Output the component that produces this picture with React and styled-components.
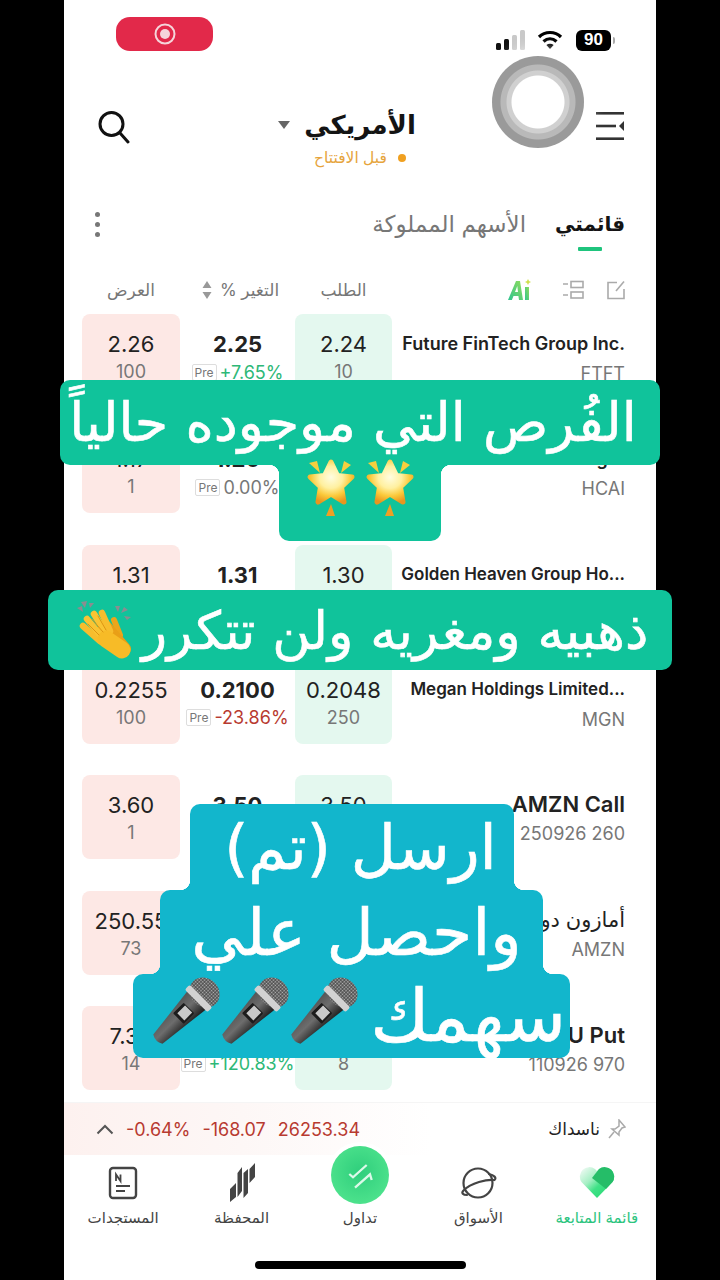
import styled, { createGlobalStyle, css } from "styled-components";

const GlobalStyle = createGlobalStyle`
  html, body { margin: 0; padding: 0; background: #000; }
  * { box-sizing: border-box; }
`;

const UI_FONT = `Inter, "Noto Sans", "DejaVu Sans", sans-serif`;

const Page = styled.div`
  position: relative;
  width: 720px;
  height: 1280px;
  overflow: hidden;
  background: #000;
  font-family: ${UI_FONT};
`;
const Screen = styled.div`
  display: flex;
  flex-direction: column;
  width: 592px;
  height: 1280px;
  margin: 0 auto;
  background: #fff;
`;
const StatusBar = styled.div`
  display: flex;
  justify-content: space-between;
  height: 102px;
  padding: 17px 39px 0 52px;
`;
const RecPill = styled.div`
  display: flex;
  align-items: center;
  justify-content: center;
  width: 97px;
  height: 34px;
  border-radius: 14px;
  background: #e2294a;
`;
const StatusIcons = styled.div`
  display: flex;
  align-items: center;
  gap: 11px;
  height: 24px;
  margin-top: 11px;
`;
const Battery = styled.div`
  position: relative;
  display: flex;
  align-items: center;
  justify-content: center;
  width: 35px;
  height: 21px;
  border-radius: 6px;
  background: #000;
  color: #fff;
  font: 700 17px "Liberation Sans", sans-serif;
  margin-left: 2px;
  margin-right: 6px;
  &::after {
    content: "";
    position: absolute;
    right: -4px;
    top: 7px;
    width: 2px;
    height: 7px;
    border-radius: 0 2px 2px 0;
    background: #aaa;
  }
`;
const Header = styled.div`
  display: flex;
  align-items: flex-start;
  justify-content: space-between;
  height: 104px;
  padding: 0 32px 0 34px;
`;
const TitleBlock = styled.div`
  display: flex;
  flex-direction: column;
  align-items: center;
  flex: 1;
  padding-top: 2px;
`;
const TitleRow = styled.div`
  display: flex;
  align-items: center;
  gap: 14px;
  margin-right: 32px;
`;
const Title = styled.div`
  font-size: 26px;
  line-height: 42px;
  font-weight: 700;
  color: #141414;
`;
const Caret = styled.div`
  width: 0;
  height: 0;
  border-left: 6px solid transparent;
  border-right: 6px solid transparent;
  border-top: 8px solid #666;
`;
const Session = styled.div`
  display: flex;
  align-items: center;
  gap: 11px;
  margin-top: 2px;
  margin-right: 6px;
  font-size: 15.5px;
  line-height: 20px;
  color: #e6a43c;
`;
const SessionDot = styled.span`
  width: 8px;
  height: 8px;
  border-radius: 50%;
  background: #f0a020;
`;
const IconBox = styled.div`
  display: flex;
  align-items: center;
  justify-content: center;
  margin-top: ${(p) => p.$top || 0}px;
`;
const TabsRow = styled.div`
  display: flex;
  align-items: flex-start;
  justify-content: space-between;
  height: 68px;
  padding: 0 31px 0 31px;
`;
const Tabs = styled.div`
  display: flex;
  gap: 29px;
`;
const Tab = styled.div`
  display: flex;
  flex-direction: column;
  align-items: center;
  font-size: ${(p) => (p.$active ? 20 : 23)}px;
  font-weight: ${(p) => (p.$active ? 700 : 400)};
  line-height: 36px;
  color: ${(p) => (p.$active ? "#141414" : "#777")};
`;
const Indicator = styled.div`
  width: 24px;
  height: 4px;
  margin-top: 5px;
  background: #1fc47d;
  border-radius: 1px;
`;
const MoreDots = styled.div`
  display: flex;
  flex-direction: column;
  gap: 5px;
  margin-top: 6px;
`;
const Dot = styled.span`
  width: 5px;
  height: 5px;
  border-radius: 50%;
  background: #777;
`;
const Grid = styled.div`
  display: grid;
  grid-template-columns: 98px 115px 97px 233px;
  padding: 0 31px 0 18px;
`;
const ColumnHead = styled(Grid)`
  height: 40px;
  align-items: center;
  padding-bottom: 8px;
  font-size: 17px;
  color: #777;
`;
const HeadCell = styled.div`
  display: flex;
  align-items: center;
  justify-content: center;
  gap: 8px;
  padding-left: ${(p) => p.$pad || 0}px;
`;
const HeadIcons = styled.div`
  display: flex;
  align-items: center;
  justify-content: flex-end;
  gap: 23px;
  & > :first-child {
    margin-right: 7px;
  }
`;
const Rows = styled.div`
  flex: 1;
  display: flex;
  flex-direction: column;
  gap: 31.33px;
`;
const Row = styled(Grid)`
  height: 84px;
`;
const Quote = styled.div`
  display: flex;
  flex-direction: column;
  align-items: center;
  padding-top: 17px;
  border-radius: 8px;
  background: ${(p) => p.$bg || "transparent"};
`;
const Value = styled.div`
  font-size: 22px;
  line-height: 26px;
  font-weight: ${(p) => (p.$bold ? 700 : 400)};
  color: #222;
`;
const Sub = styled.div`
  font-size: 18px;
  line-height: 26px;
  margin-top: 2px;
  color: #777;
`;
const PctRow = styled.div`
  display: flex;
  align-items: center;
  gap: 3px;
  height: 26px;
  margin-top: 2px;
  white-space: nowrap;
`;
const PreBadge = styled.span`
  display: flex;
  align-items: center;
  justify-content: center;
  width: 25px;
  height: 17px;
  border: 1px solid #ddd;
  border-radius: 2px;
  font-size: 12px;
  color: #777;
`;
const Pct = styled.span`
  font-size: 18px;
  color: ${(p) => p.$color};
`;
const NameCell = styled.div`
  display: flex;
  flex-direction: column;
  align-items: flex-end;
  padding-top: ${(p) => (p.$size > 20 ? 16 : 19)}px;
  white-space: nowrap;
`;
const Name = styled.div`
  font-size: ${(p) => p.$size}px;
  line-height: ${(p) => (p.$size > 20 ? 26 : 21)}px;
  font-weight: ${(p) => p.$weight || 600};
  color: #222;
`;
const Symbol = styled.div`
  font-size: 18px;
  line-height: 24px;
  margin-top: ${(p) => (p.$size > 20 ? 5 : 8)}px;
  color: #777;
`;
const Ticker = styled.div`
  display: flex;
  align-items: center;
  justify-content: space-between;
  height: 53px;
  flex: none;
  padding: 0 30px 0 32px;
  border-top: 1px solid #f5f5f5;
  background: linear-gradient(90deg, #fdf1ef 0%, #fdf7f6 30%, #fff 62%);
`;
const TickerLeft = styled.div`
  display: flex;
  align-items: center;
  gap: 12px;
  font-size: 18px;
  color: #b83a30;
`;
const TickerRight = styled.div`
  display: flex;
  align-items: center;
  gap: 8px;
  font-size: 17px;
  color: #222;
`;
const TabBar = styled.div`
  flex: none;
  height: 125px;
  display: flex;
  flex-direction: column;
  justify-content: space-between;
  padding-bottom: 11px;
`;
const NavGrid = styled.div`
  display: grid;
  grid-template-columns: repeat(5, 1fr);
  padding-top: 7px;
`;
const NavItem = styled.div`
  display: flex;
  flex-direction: column;
  align-items: center;
  gap: 5px;
`;
const NavIcon = styled.div`
  display: flex;
  align-items: center;
  justify-content: center;
  height: 42px;
`;
const TradeButton = styled.div`
  display: flex;
  align-items: center;
  justify-content: center;
  width: 58px;
  height: 58px;
  margin-top: -16px;
  border-radius: 50%;
  background: radial-gradient(circle at 50% 45%, #2fce7c, #57e992);
  box-shadow: 0 0 0 4px #fff;
`;
const NavLabel = styled.div`
  font-size: 15px;
  line-height: 18px;
  white-space: nowrap;
  color: ${(p) => (p.$active ? "#2cc47e" : "#444")};
`;
const HomeBar = styled.div`
  width: 211px;
  height: 8px;
  margin: 0 auto;
  border-radius: 4px;
  background: #000;
`;
const TouchBall = styled.div`
  position: absolute;
  left: 492px;
  top: 56px;
  width: 92px;
  height: 92px;
  border-radius: 50%;
  background: radial-gradient(circle, #fff 0 26px, #d0d0d0 27px 31px, #b9b9b9 32px 37px, #9a9a9a 38px);
  box-shadow: 0 0 14px 6px rgba(255, 255, 255, 0.9);
`;
const Caption = styled.div`
  position: absolute;
  left: ${(p) => p.$left || 0}px;
  top: ${(p) => p.$top}px;
  width: 720px;
  display: flex;
  flex-direction: column;
  align-items: center;
  font-family: "DejaVu Sans", serif;
  color: #fff;
  -webkit-text-stroke: 0.6px #fff;
`;

// concave corners where a narrow caption line meets a wider one
const flare = (bg, side) => css`
  &::before,
  &::after {
    content: "";
    position: absolute;
    ${side}: 0;
    width: 10px;
    height: 10px;
  }
  &::before {
    left: -10px;
    background: radial-gradient(circle at 0 ${side === "bottom" ? "0" : "100%"}, transparent 10px, ${bg} 10.5px);
  }
  &::after {
    right: -10px;
    background: radial-gradient(circle at 100% ${side === "bottom" ? "0" : "100%"}, transparent 10px, ${bg} 10.5px);
  }
`;

const CaptionLine = styled.div`
  position: relative;
  display: flex;
  align-items: center;
  justify-content: ${(p) => p.$justify || "center"};
  gap: ${(p) => p.$gap || 0}px;
  width: ${(p) => p.$w}px;
  height: ${(p) => p.$h}px;
  padding: ${(p) => p.$pad || "0"};
  border-radius: ${(p) =>
    p.$flare === "bottom" ? "10px 10px 0 0" : p.$flare === "top" ? "0 0 10px 10px" : "10px"};
  background: ${(p) => p.$bg};
  font-size: ${(p) => p.$size || 54}px;
  white-space: nowrap;
  ${(p) => p.$flare && flare(p.$bg, p.$flare)}
`;
const StarRow = styled.div`
  display: flex;
  gap: 3px;
  align-self: flex-start;
  margin-top: -10px;
`;
const MicRow = styled.div`
  display: flex;
  align-self: flex-start;
  margin-right: 12px;
`;

const GREEN = "#2db877";
const RED = "#b83a30";
const GREY = "#777";
const TEAL = "#10c39b";
const CYAN = "#12b6cc";

// values that the captions cover in the picture are left out
const quotes = [
  { ask: "2.26", askQty: "100", last: "2.25", pct: "+7.65%", color: GREEN, bid: "2.24", bidQty: "10", name: "Future FinTech Group Inc.", size: 18, symbol: "FTFT" },
  { ask: "1.17", askQty: "1", last: "1.20", pct: "0.00%", color: GREY, name: "Huachen AI Parking...", size: 18, symbol: "HCAI" },
  { ask: "1.31", last: "1.31", bid: "1.30", name: "Golden Heaven Group Ho...", size: 17 },
  { ask: "0.2255", askQty: "100", last: "0.2100", pct: "-23.86%", color: RED, bid: "0.2048", bidQty: "250", name: "Megan Holdings Limited...", size: 17, symbol: "MGN" },
  { ask: "3.60", askQty: "1", last: "3.50", bid: "3.50", name: "AMZN Call", size: 22, symbol: "250926 260" },
  { ask: "250.55", askQty: "73", name: "أمازون دوت كوم", size: 21, weight: 400, symbol: "AMZN" },
  { ask: "7.30", askQty: "14", pct: "+120.83%", color: GREEN, bidQty: "8", name: "MSTU Put", size: 22, symbol: "110926 970" },
];

function NewsIcon() {
  return (
    <svg width="30" height="34" viewBox="0 0 30 34" fill="none">
      <rect x="2" y="2" width="26" height="30" rx="3" stroke="#444" strokeWidth="2.4" />
      <path d="M8 15V8.5l4.5 6.5V8.5" stroke="#444" strokeWidth="1.8" />
      <path d="M8 20h14M8 25h9" stroke="#444" strokeWidth="2" />
    </svg>
  );
}

function PortfolioIcon() {
  return (
    <svg width="28" height="40" viewBox="0 0 28 40" fill="#444">
      <path d="M2 26l6-6v14l-6 5zM9.5 10L14 4v24l-4.5 6zM15.5 10L20 6v24l-4.5 5zM21.5 6L27 0v14l-5.5 6z" />
    </svg>
  );
}

function PlanetIcon() {
  return (
    <svg width="38" height="36" viewBox="0 0 38 36" fill="none" stroke="#444" strokeWidth="2.2" strokeLinecap="round">
      <circle cx="19" cy="18" r="14.5" />
      <path d="M30 9c5 1 8 4 5.500 6C28 14 12 18 4.500 25.500 2 28 4 30 8 30" />
    </svg>
  );
}

function HeartIcon() {
  return (
    <svg width="36" height="32" viewBox="0 0 36 32">
      <defs>
        <linearGradient id="heartBody" x1="0" y1="0.1" x2="0.7" y2="0.8">
          <stop offset="0" stopColor="#eefaf3" />
          <stop offset="0.45" stopColor="#a5efc4" />
          <stop offset="0.75" stopColor="#3fe286" />
          <stop offset="1" stopColor="#33dc7c" />
        </linearGradient>
      </defs>
      <path d="M18 31L2.500 15A9.500 9.500 0 0 1 16 2l2 2 2-2a9.500 9.500 0 0 1 13.500 13z" fill="url(#heartBody)" />
      <path d="M13 11l7-9a9.500 9.500 0 0 1 13.500 13L27 22z" fill="#25bd68" />
    </svg>
  );
}

function TradeIcon() {
  return (
    <svg width="30" height="30" viewBox="0 0 30 30" fill="none" stroke="#dcf9e9" strokeWidth="2.3">
      <path d="M4.300 14L8 17.300 21.700 5" />
      <path d="M10 27.700L25 14.300l1.700 5.700" />
    </svg>
  );
}

function SearchIcon() {
  return (
    <svg width="32" height="34" viewBox="0 0 32 34" fill="none" stroke="#111" strokeWidth="3">
      <circle cx="13.5" cy="14" r="11.5" />
      <path d="M22 23l8 9" strokeLinecap="round" />
    </svg>
  );
}

function MenuIcon() {
  return (
    <svg width="28" height="30" viewBox="0 0 28 30" fill="#333">
      <rect y="1" width="28" height="2.6" />
      <rect y="13.7" width="20" height="2.6" />
      <path d="M28 10v10l-5-5z" />
      <rect y="26.4" width="28" height="2.6" />
    </svg>
  );
}

function SignalIcon() {
  return (
    <svg width="30" height="20" viewBox="0 0 30 20">
      <rect x="0" y="13" width="5" height="7" rx="1.5" fill="#111" />
      <rect x="8" y="9" width="5" height="11" rx="1.5" fill="#111" />
      <rect x="16" y="5" width="5" height="15" rx="1.5" fill="#c9c9c9" />
      <rect x="24" y="0" width="5" height="20" rx="1.5" fill="#c9c9c9" />
    </svg>
  );
}

function WifiIcon() {
  return (
    <svg width="26" height="20" viewBox="0 0 26 20" fill="none" stroke="#000" strokeWidth="3.2">
      <path d="M2 7c6-6 16-6 22 0" />
      <path d="M6.5 11.5c4-3.6 9-3.6 13 0" />
      <path d="M13 19l-3.6-4c2-1.6 5.2-1.6 7.2 0z" fill="#000" stroke="none" />
    </svg>
  );
}

function EditIcon() {
  return (
    <svg width="18" height="20" viewBox="0 0 18 20" fill="none" stroke="#aaa" strokeWidth="1.6">
      <path d="M10 2.5H1v16h16V9" />
      <path d="M9 11l8-9.5" />
    </svg>
  );
}

function ListIcon() {
  return (
    <svg width="22" height="20" viewBox="0 0 22 20" fill="none" stroke="#aaa" strokeWidth="1.6">
      <path d="M1 4h5M1 15h5" />
      <rect x="9" y="1.5" width="12" height="6" />
      <rect x="9" y="12" width="12" height="6" />
    </svg>
  );
}

function AiIcon() {
  return (
    <svg width="24" height="22" viewBox="0 0 24 22">
      <defs>
        <linearGradient id="aiFill" x1="0" y1="1" x2="1" y2="0">
          <stop offset="0" stopColor="#2fc48f" />
          <stop offset="1" stopColor="#8fdc5c" />
        </linearGradient>
      </defs>
      <path d="M0 21L8 2h4l3 19h-4l-.6-4H5.500l-1.600 4zM7 13h3l-.7-6z" fill="url(#aiFill)" />
      <rect x="17" y="8" width="4" height="13" fill="url(#aiFill)" />
      <path d="M20 0l1 2 2 1-2 1-1 2-1-2-2-1 2-1z" fill="#cfe04d" />
    </svg>
  );
}

function SortIcon() {
  return (
    <svg width="10" height="18" viewBox="0 0 10 18" fill="#999">
      <path d="M5 0l4.500 7h-9zM5 18l-4.500-7h9z" />
    </svg>
  );
}

function PinIcon() {
  return (
    <svg width="18" height="20" viewBox="0 0 18 20" fill="none" stroke="#aaa" strokeWidth="1.5">
      <path d="M11 1l6 7-3 1-3 4 0 3-7-6 3 0 4-3z" />
      <path d="M6 13l-5 6" />
    </svg>
  );
}

function ChevronIcon() {
  return (
    <svg width="18" height="11" viewBox="0 0 18 11" fill="none" stroke="#555" strokeWidth="2">
      <path d="M1.500 9.500L9 2l7.500 7.500" />
    </svg>
  );
}

function StarEmoji() {
  return (
    <svg width="56" height="62" viewBox="0 0 56 62">
      <defs>
        <radialGradient id="starFill" cx="0.5" cy="0.38" r="0.66">
          <stop offset="0" stopColor="#fffde0" />
          <stop offset="0.42" stopColor="#fff0a0" />
          <stop offset="0.72" stopColor="#fbc93a" />
          <stop offset="1" stopColor="#e8951e" />
        </radialGradient>
      </defs>
      <path
        d="M28 7l6.500 13.500L49 22 38.500 32 41 47l-13-8-13 8 2.500-15L7 22l14.500-1.500z"
        fill="url(#starFill)"
        stroke="url(#starFill)"
        strokeWidth="5"
        strokeLinejoin="round"
      />
      <path d="M6 8l8-2 3 12z" fill="#f6cf3e" />
      <path d="M41 6l7 4-10 8z" fill="#f6cf3e" />
      <path d="M28 49l4 12h-9z" fill="#ef9f24" />
    </svg>
  );
}

function ClapEmoji() {
  return (
    <svg width="60" height="70" viewBox="0 0 60 70" fill="none" strokeLinecap="round">
      <path d="M5 13l5-2 1 6zM9 7l6-1-2 7zM17 8l5 0-4 5zM43 11l5 0-2 6zM52 12l4 3-7 3zM52 21l7 1-4 3z" fill="#8a8d90" />
      <path d="M42 25l6 15" stroke="#eca51a" strokeWidth="6" />
      <path d="M33 32l19 22" stroke="#e99f17" strokeWidth="14" />
      <path d="M28 46L11 31" stroke="#f7bd2d" strokeWidth="6.5" />
      <path d="M30 42L15 24" stroke="#f9c433" strokeWidth="6.5" />
      <path d="M34 38L22 19" stroke="#f9c433" strokeWidth="6.5" />
      <path d="M38 36L30 18" stroke="#f7bd2d" strokeWidth="6.5" />
      <path d="M34 44l16 11" stroke="#f7bb27" strokeWidth="17" />
      <path d="M16 29l11 11M20 24l11 13M26 21l8 14" stroke="#dd9512" strokeWidth="1" />
    </svg>
  );
}

function MicEmoji() {
  return (
    <svg width="69" height="72" viewBox="0 0 69 72">
      <defs>
        <linearGradient id="micBody" x1="0" y1="0" x2="1" y2="0">
          <stop offset="0" stopColor="#555" />
          <stop offset="0.45" stopColor="#6d6d6d" />
          <stop offset="1" stopColor="#1e1e1e" />
        </linearGradient>
        <pattern id="micMesh" width="2.500" height="2.500" patternUnits="userSpaceOnUse">
          <rect width="2.500" height="2.500" fill="#4c4c4c" />
          <circle cx="1.250" cy="1.250" r="0.800" fill="#bdbdbd" />
        </pattern>
      </defs>
      <g transform="translate(50 22) rotate(45)">
        <path d="M-13 6h26l-6.500 55q-6.500 4-13 0z" fill="url(#micBody)" />
        <ellipse cx="0" cy="-5" rx="16" ry="14" fill="url(#micMesh)" />
        <rect x="-16" y="0" width="32" height="7" rx="2" fill="#d2d2d2" />
        <rect x="-7.500" y="17" width="15" height="15" rx="1" fill="#1c1c1c" />
        <rect x="-4.500" y="18" width="10" height="11" fill="#c9c9c9" />
      </g>
    </svg>
  );
}

const nav = [
  { label: "المستجدات", icon: <NewsIcon /> },
  { label: "المحفظة", icon: <PortfolioIcon /> },
  { label: "تداول", trade: true },
  { label: "الأسواق", icon: <PlanetIcon /> },
  { label: "قائمة المتابعة", icon: <HeartIcon />, active: true },
];

function QuoteRow({ q }) {
  return (
    <Row>
      <Quote $bg="#fde8e5">
        <Value>{q.ask}</Value>
        {q.askQty && <Sub>{q.askQty}</Sub>}
      </Quote>
      <Quote>
        <Value $bold>{q.last || "\u00a0"}</Value>
        {q.pct && (
          <PctRow>
            <PreBadge>Pre</PreBadge>
            <Pct $color={q.color}>{q.pct}</Pct>
          </PctRow>
        )}
      </Quote>
      <Quote $bg="#e4f8ef">
        <Value>{q.bid || "\u00a0"}</Value>
        {q.bidQty && <Sub>{q.bidQty}</Sub>}
      </Quote>
      <NameCell $size={q.size}>
        <Name $size={q.size} $weight={q.weight}>
          {q.name}
        </Name>
        {q.symbol && <Symbol $size={q.size}>{q.symbol}</Symbol>}
      </NameCell>
    </Row>
  );
}

export default function App() {
  return (
    <Page>
      <GlobalStyle />
      <Screen>
        <StatusBar>
          <RecPill>
            <svg width="22" height="22" viewBox="0 0 22 22" fill="none">
              <circle cx="11" cy="11" r="9.5" stroke="#f5d5da" strokeWidth="2" />
              <circle cx="11" cy="11" r="5" fill="#f5d5da" />
            </svg>
          </RecPill>
          <StatusIcons>
            <SignalIcon />
            <WifiIcon />
            <Battery>90</Battery>
          </StatusIcons>
        </StatusBar>
        <Header>
          <IconBox $top={8}>
            <SearchIcon />
          </IconBox>
          <TitleBlock>
            <TitleRow>
              <Caret />
              <Title>الأمريكي</Title>
            </TitleRow>
            <Session>
              <span>قبل الافتتاح</span>
              <SessionDot />
            </Session>
          </TitleBlock>
          <IconBox $top={9}>
            <MenuIcon />
          </IconBox>
        </Header>
        <TabsRow>
          <MoreDots>
            <Dot />
            <Dot />
            <Dot />
          </MoreDots>
          <Tabs>
            <Tab>الأسهم المملوكة</Tab>
            <Tab $active>
              قائمتي
              <Indicator />
            </Tab>
          </Tabs>
        </TabsRow>
        <ColumnHead>
          <HeadCell>العرض</HeadCell>
          <HeadCell $pad={6}>
            <SortIcon />
            <span dir="rtl">التغير %</span>
          </HeadCell>
          <HeadCell>الطلب</HeadCell>
          <HeadIcons>
            <AiIcon />
            <ListIcon />
            <EditIcon />
          </HeadIcons>
        </ColumnHead>
        <Rows>
          {quotes.map((q) => (
            <QuoteRow key={q.name} q={q} />
          ))}
        </Rows>
        <Ticker>
          <TickerLeft>
            <ChevronIcon />
            <span>-0.64%</span>
            <span>-168.07</span>
            <span>26253.34</span>
          </TickerLeft>
          <TickerRight>
            <span>ناسداك</span>
            <PinIcon />
          </TickerRight>
        </Ticker>
        <TabBar>
          <NavGrid>
            {nav.map((item) => (
              <NavItem key={item.label}>
                {item.trade ? (
                  <TradeButton>
                    <TradeIcon />
                  </TradeButton>
                ) : (
                  <NavIcon>{item.icon}</NavIcon>
                )}
                <NavLabel $active={item.active}>{item.label}</NavLabel>
              </NavItem>
            ))}
          </NavGrid>
          <HomeBar />
        </TabBar>
      </Screen>

      <TouchBall />

      <Caption $top={380}>
        <CaptionLine $w={600} $h={85} $bg={TEAL} $pad="0 14px 0 0">
          الفُرص التي موجوده حالياً
        </CaptionLine>
        <CaptionLine $w={162} $h={76} $bg={TEAL} $flare="top">
          <StarRow>
            <StarEmoji />
            <StarEmoji />
          </StarRow>
        </CaptionLine>
      </Caption>
      <Caption $top={590}>
        <CaptionLine $w={624} $h={80} $bg={TEAL} $size={52.5} $gap={10}>
          <ClapEmoji />
          ذهبيه ومغريه ولن تتكرر
        </CaptionLine>
      </Caption>
      <Caption $top={804} $left={-8.5}>
        <CaptionLine $w={324} $h={86} $bg={CYAN} $size={62} $flare="bottom" $pad="0 0 0 18px">
          ارسل (تم)
        </CaptionLine>
        <CaptionLine $w={383} $h={84} $bg={CYAN} $size={65} $flare="bottom" $pad="0 0 0 10px">
          واحصل علي
        </CaptionLine>
        <CaptionLine $w={437} $h={84} $bg={CYAN} $size={72} $justify="flex-end" $pad="0 4px 0 0">
          <MicRow>
            <MicEmoji />
            <MicEmoji />
            <MicEmoji />
          </MicRow>
          سهمك
        </CaptionLine>
      </Caption>
    </Page>
  );
}
